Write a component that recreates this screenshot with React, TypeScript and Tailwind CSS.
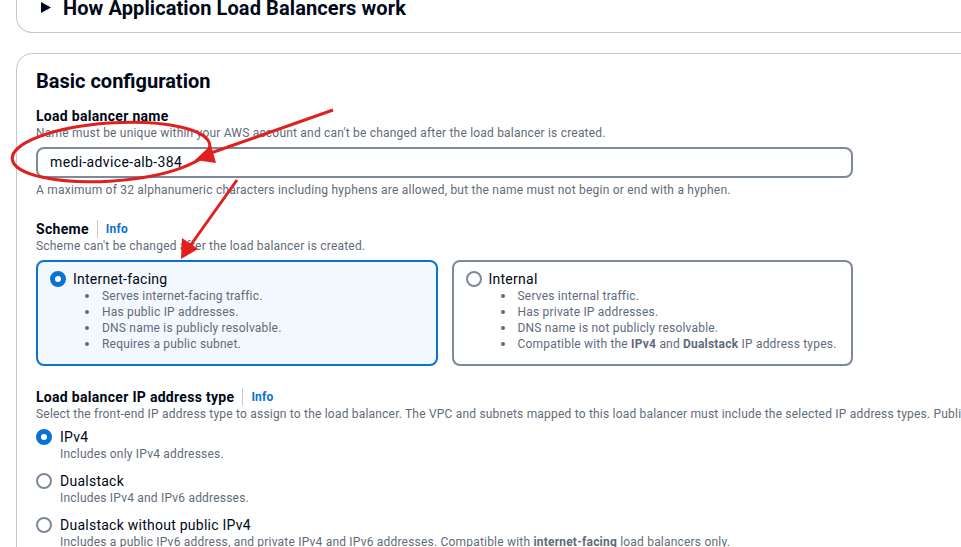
import React from "react";

const FONT = { fontFamily: "Roboto, 'Liberation Sans', sans-serif" };

function Radio({ checked }: { checked: boolean }): React.JSX.Element {
  return checked ? (
    <span className="block h-4 w-4 flex-shrink-0 rounded-full border-[5px] border-[#0972d3] bg-white" />
  ) : (
    <span className="block h-4 w-4 flex-shrink-0 rounded-full border-2 border-[#7d8998] bg-white" />
  );
}

function LabelWithInfo({ label }: { label: string }): React.JSX.Element {
  return (
    <div className="flex items-center text-[14px] leading-[18px]">
      <span className="font-bold tracking-[0.3px] text-[#000716]">{label}</span>
      <span className="mx-2 h-[18px] w-px bg-[#c6c6cd]" />
      <span className="text-[12px] font-bold tracking-[0.2px] text-[#0972d3]">Info</span>
    </div>
  );
}

function SchemeTile({
  title,
  checked,
  items,
}: {
  title: string;
  checked: boolean;
  items: React.ReactNode[];
}): React.JSX.Element {
  return (
    <div
      className={[
        "flex h-[106px] flex-col rounded-lg border-2 px-3 pt-2",
        checked ? "border-[#0972d3] bg-[#f2f8fd]" : "border-[#7d8998] bg-white",
      ].join(" ")}
    >
      <div className="flex items-center gap-[7px]">
        <Radio checked={checked} />
        <span className="text-[14px] leading-[18px] tracking-[0.25px] text-[#000716]">{title}</span>
      </div>
      <ul className="pl-[37px]">
        {items.map((it, i) => (
          <li key={i} className="flex items-center text-[12px] leading-[16px] tracking-[0.2px] text-[#5f6b7a]">
            <span className="ml-[-2px] mr-[13px] inline-block h-[4px] w-[4px] rounded-full bg-[#5f6b7a]" />
            <span>{it}</span>
          </li>
        ))}
      </ul>
    </div>
  );
}

function IpOption({
  title,
  desc,
  checked,
}: {
  title: string;
  desc: React.ReactNode;
  checked: boolean;
}): React.JSX.Element {
  return (
    <div className="flex flex-col">
      <div className="flex items-center gap-[8px]">
        <Radio checked={checked} />
        <span className="text-[14px] leading-[18px] tracking-[0.25px] text-[#000716]">{title}</span>
      </div>
      <div className="whitespace-nowrap pl-[24px] text-[12px] leading-[16px] tracking-[0.2px] text-[#5f6b7a]">{desc}</div>
    </div>
  );
}

export default function App(): React.JSX.Element {
  return (
    <div className="relative h-[547px] w-[961px] overflow-hidden bg-white" style={FONT}>
      {/* ── Collapsed "How it works" panel ─────────────────────────── */}
      <div className="ml-[16px] h-[33px] w-[980px] rounded-b-[16px] border-x border-b border-[#c6c6cd]">
        <div className="flex items-center gap-[12px] pl-[24px] leading-[16px]">
          <svg width="10" height="11" viewBox="0 0 10 11" className="mt-[-1px]">
            <path d="M0 0 L10 5.5 L0 11 Z" fill="#000716" />
          </svg>
          <span className="text-[20px] font-bold tracking-[0.1px] text-[#000716]">How Application Load Balancers work</span>
        </div>
      </div>

      {/* ── Basic configuration panel ──────────────────────────────── */}
      <div className="ml-[16px] mt-[20px] h-[600px] w-[980px] rounded-[16px] border border-[#c6c6cd] pl-[19px] pt-[15px]">
        <h2 className="text-[20px] font-bold leading-[24px] text-[#000716]">Basic configuration</h2>

        <div className="mt-[14px] w-[817px]">
          <div className="text-[14px] font-bold leading-[18px] tracking-[0.3px] text-[#000716]">Load balancer name</div>
          <div className="text-[12px] leading-[16px] tracking-[0.2px] text-[#5f6b7a]">
            Name must be unique within your AWS account and can't be changed after the load balancer is created.
          </div>
          <div className="mt-[6px] flex h-[31px] items-center rounded-lg border-2 border-[#7d8998] px-[12px] text-[14px] tracking-[0.35px] text-[#000716]">
            medi-advice-alb-384
          </div>
          <div className="mt-[4px] text-[12px] leading-[16px] tracking-[0.22px] text-[#5f6b7a]">
            A maximum of 32 alphanumeric characters including hyphens are allowed, but the name must not begin or end with a hyphen.
          </div>
        </div>

        <div className="mt-[22px] w-[817px]">
          <LabelWithInfo label="Scheme" />
          <div className="text-[12px] leading-[16px] tracking-[0.2px] text-[#5f6b7a]">
            Scheme can't be changed after the load balancer is created.
          </div>
          <div className="mt-[6px] grid grid-cols-2 gap-[14px]">
            <SchemeTile
              title="Internet-facing"
              checked
              items={[
                "Serves internet-facing traffic.",
                "Has public IP addresses.",
                "DNS name is publicly resolvable.",
                "Requires a public subnet.",
              ]}
            />
            <SchemeTile
              title="Internal"
              checked={false}
              items={[
                "Serves internal traffic.",
                "Has private IP addresses.",
                "DNS name is not publicly resolvable.",
                <>
                  Compatible with the <b className="font-bold">IPv4</b> and <b className="font-bold">Dualstack</b> IP address types.
                </>,
              ]}
            />
          </div>
        </div>

        <div className="mt-[22px]">
          <LabelWithInfo label="Load balancer IP address type" />
          <div className="whitespace-nowrap text-[12px] leading-[16px] tracking-[0.2px] text-[#5f6b7a]">
            Select the front-end IP address type to assign to the load balancer. The VPC and subnets mapped to this load balancer must include the selected IP address types. Public IPv4 addresses have an additional cost.
          </div>
          <div className="mt-[6px] flex flex-col gap-[10px]">
            <IpOption title="IPv4" desc="Includes only IPv4 addresses." checked />
            <IpOption title="Dualstack" desc="Includes IPv4 and IPv6 addresses." checked={false} />
            <IpOption
              title="Dualstack without public IPv4"
              checked={false}
              desc={
                <>
                  Includes a public IPv6 address, and private IPv4 and IPv6 addresses. Compatible with{" "}
                  <b className="font-bold">internet-facing</b> load balancers only.
                </>
              }
            />
          </div>
        </div>
      </div>

      {/* ── Red annotations drawn over the page ────────────────────── */}
      <svg className="pointer-events-none absolute inset-0" width="961" height="547" viewBox="0 0 961 547">
        <ellipse
          cx="111"
          cy="152"
          rx="99"
          ry="29"
          fill="none"
          stroke="#e0201f"
          strokeWidth="3"
          transform="rotate(-4 111 152)"
        />
        <line x1="333" y1="110" x2="208" y2="154" stroke="#e0201f" strokeWidth="3" />
        <path d="M195 160 L211 145 L216 163 Z" fill="#e0201f" />
        <line x1="237" y1="180" x2="190" y2="246" stroke="#e0201f" strokeWidth="3" />
        <path d="M181 259 L182 238 L198 249 Z" fill="#e0201f" />
      </svg>
    </div>
  );
}
